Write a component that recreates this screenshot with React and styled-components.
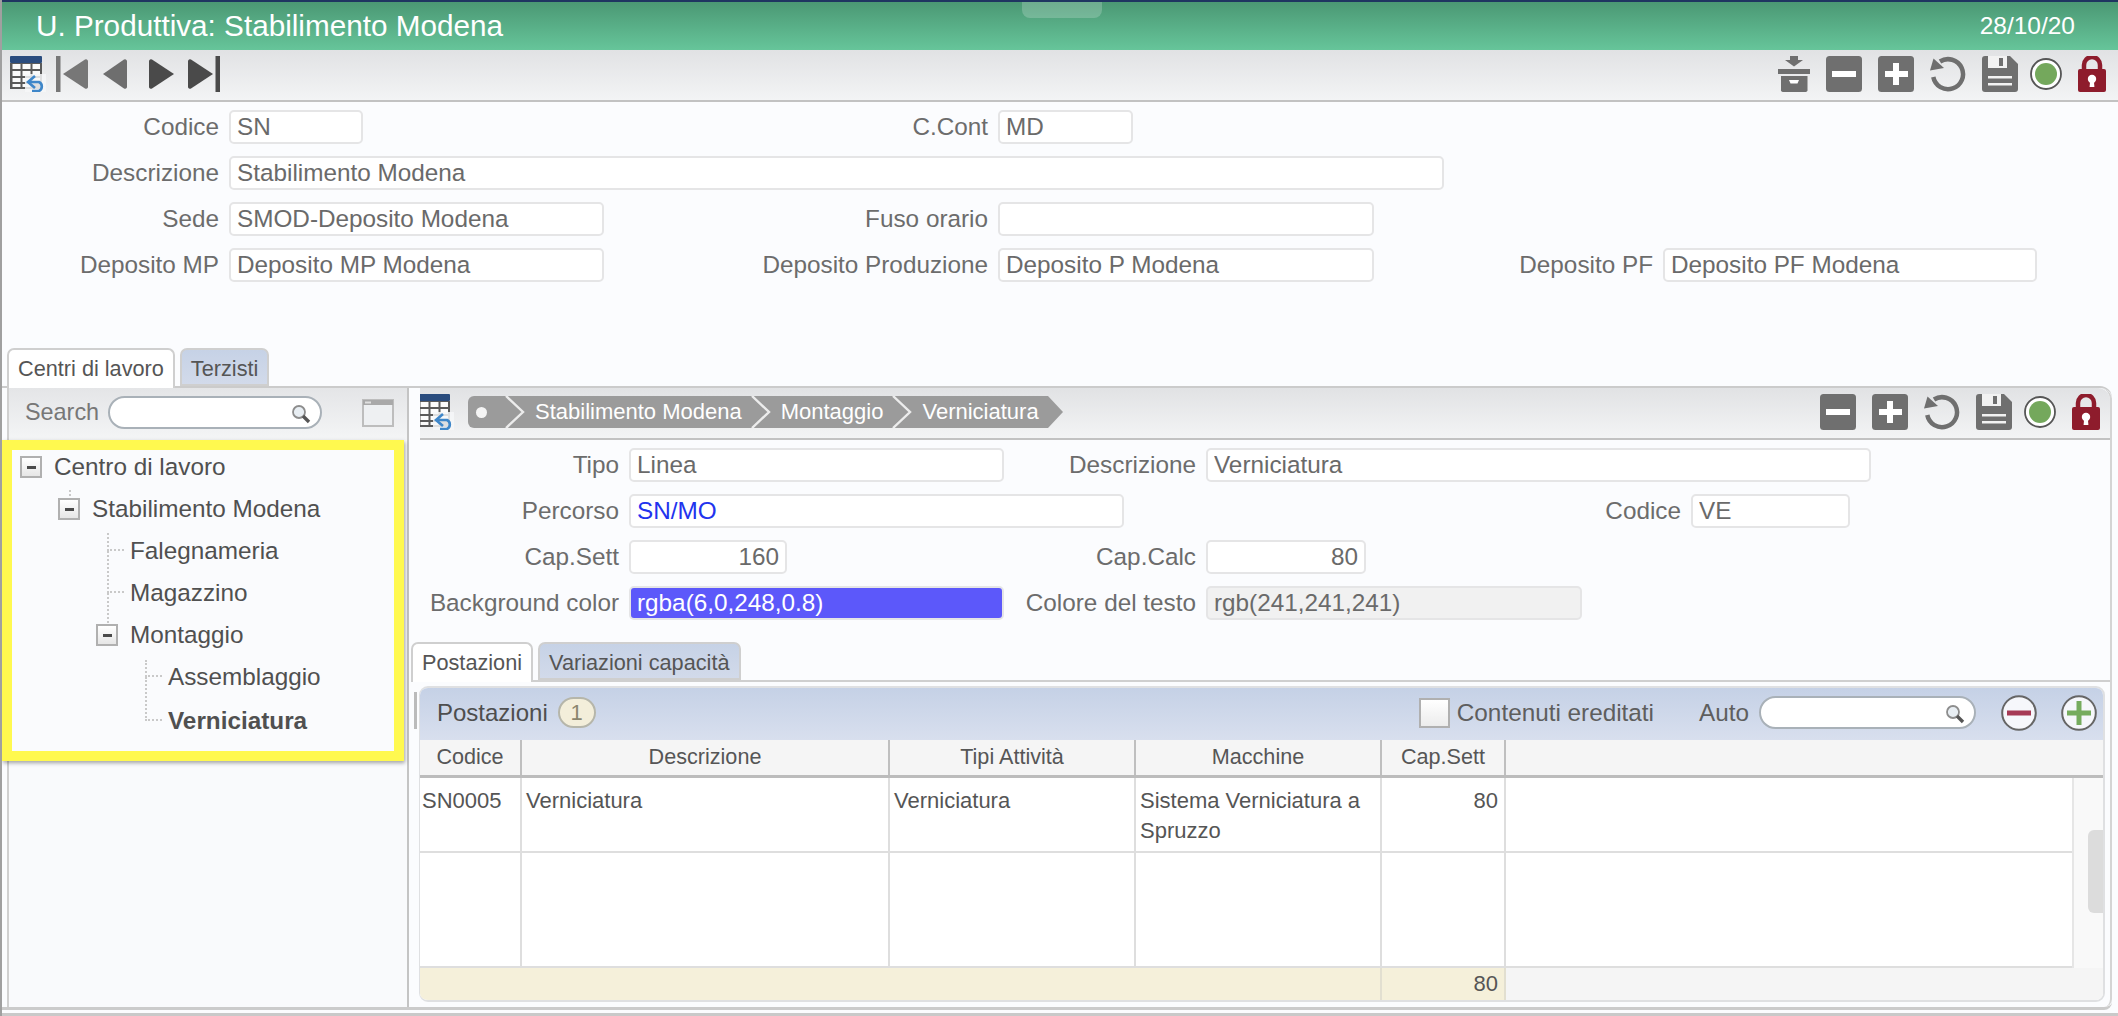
import React from 'react'
import styled, { createGlobalStyle } from 'styled-components'

const GlobalStyle = createGlobalStyle`
    html, body {
        margin: 0;
        padding: 0;
        background: #fcfdfe;
        font-family: "Liberation Sans", Arial, sans-serif;
    }
    * {
        box-sizing: border-box;
    }
`

const Page = styled.div`
    width: 2118px;
    height: 1016px;
    overflow: hidden;
    display: flex;
    flex-direction: column;
    background: #fbfcfe;
    border-left: 2px solid #a0a0a0;
`

const TitleBar = styled.header`
    position: relative;
    flex: none;
    height: 50px;
    display: flex;
    align-items: center;
    justify-content: space-between;
    padding: 0 43px 0 34px;
    border-top: 2px solid #1f3561;
    background: linear-gradient(#4b9874, #66c59a);
    color: #fff;
`

const Title = styled.h1`
    margin: 0;
    font-size: 29.7px;
    font-weight: 400;
`

const DateText = styled.span`
    font-size: 24.5px;
`

const Handle = styled.div`
    position: absolute;
    top: 0;
    left: 1020px;
    width: 80px;
    height: 16px;
    border-radius: 0 0 8px 8px;
    background: rgba(255, 255, 255, 0.2);
`

const Toolbar = styled.div`
    flex: none;
    height: 52px;
    display: flex;
    align-items: flex-start;
    justify-content: space-between;
    overflow: hidden;
    padding: 6px ${props => props.$right}px 0 ${props => props.$left}px;
    margin-left: ${props => props.$inset || 0}px;
    background: linear-gradient(#e1e2e4, #f3f4f5);
    border-bottom: 2px solid #c2c2c2;
    border-top-right-radius: ${props => (props.$rounded ? '12px' : '0')};
`

const IconGroup = styled.div`
    display: flex;
    align-items: flex-start;
`

const ActionGroup = styled(IconGroup)`
    gap: 16px;
`

const Glyph = styled.svg`
    display: block;
    flex: none;
    margin-left: ${props => props.$ml || 0}px;
    margin-top: ${props => props.$mt || 0}px;
`

const Form = styled.section`
    flex: none;
    display: flex;
    flex-direction: column;
    gap: 12px;
    padding: 8px 0 0 ${props => props.$left || 0}px;
`

const Row = styled.div`
    display: flex;
    align-items: center;
    height: 34px;
`

const Label = styled.label`
    flex: none;
    width: ${props => props.$w}px;
    margin-right: 10px;
    text-align: right;
    font-size: 24.3px;
    color: #6c6c6c;
    white-space: nowrap;
`

const Input = styled.input`
    flex: none;
    width: ${props => props.$w}px;
    height: 34px;
    padding: 0 6px;
    border: 2px solid #e5e5e6;
    border-radius: 5px;
    outline: none;
    font-family: inherit;
    font-size: 24.3px;
    text-align: ${props => (props.$number ? 'right' : 'left')};
    color: ${props => props.$color || '#6a6a6a'};
    background: ${props => props.$bg || '#fff'};
`

const TabStrip = styled.div`
    position: relative;
    z-index: 1;
    flex: none;
    display: flex;
    align-items: flex-start;
    gap: 5px;
    height: 40px;
    margin-top: ${props => props.$top}px;
    padding-left: ${props => props.$left}px;
`

const Tab = styled.div`
    height: ${props => (props.$active ? '40px' : '38px')};
    padding: 6px 9px 0;
    border: 2px solid #cfcfcf;
    border-bottom: ${props => (props.$active ? 'none' : '2px solid #cfcfcf')};
    border-radius: 7px 7px 0 0;
    font-size: 21.7px;
    color: #555;
    white-space: nowrap;
    background: ${props => (props.$active ? '#fff' : 'linear-gradient(#c6d2e6, #d2daea)')};
`

const Body = styled.main`
    flex: none;
    display: flex;
    width: 2110px;
    height: 624px;
    margin-top: -2px;
    border-top: 2px solid #cbcbcb;
    border-bottom: 3px solid #cbcbcb;
    border-top-right-radius: 12px;
    border-bottom-right-radius: 8px;
`

const LeftPanel = styled.aside`
    flex: none;
    width: 402px;
    margin-left: 5px;
    border-left: 2px solid #d0d0d0;
    border-right: 2px solid #c4c4c4;
    background: #f9fafc;
`

const SearchBar = styled.div`
    height: 52px;
    display: flex;
    align-items: center;
    padding: 0 12px 3px 16px;
    background: linear-gradient(#e4e5e7, #f4f5f6);
`

const SearchLabel = styled.span`
    font-size: 23.4px;
    color: #777;
    margin-right: 9px;
`

const SearchBox = styled.div`
    flex: none;
    display: flex;
    align-items: center;
    justify-content: flex-end;
    width: ${props => props.$w}px;
    height: 33px;
    margin-left: ${props => props.$ml || 0}px;
    padding-right: 9px;
    border: 2px solid #a9b1b8;
    border-radius: 17px;
    background: #fff;
`

const SearchInput = styled.input`
    flex: 1;
    min-width: 0;
    height: 100%;
    border: none;
    outline: none;
    background: transparent;
    border-radius: 17px;
`

const Highlight = styled.div`
    position: relative;
    z-index: 2;
    width: 402px;
    height: 321px;
    margin-left: -7px;
    padding-top: 1px;
    border: 10px solid #fff94f;
    background: #fafbfd;
    box-shadow: 1px 2px 4px rgba(0, 0, 0, 0.35);
`

const Tree = styled.ul`
    display: flex;
    flex-direction: column;
    gap: 10px;
    margin: 0;
    padding: 0;
    list-style: none;
`

const TreeRow = styled.li`
    position: relative;
    display: flex;
    align-items: center;
    height: 32px;
    margin-top: ${props => (props.$bold ? '2px' : '0')};
    padding-left: ${props => 8 + props.$level * 38}px;
    font-size: 24.3px;
    font-weight: ${props => (props.$bold ? 700 : 400)};
    color: #505050;
`

const Expander = styled.span`
    flex: none;
    display: flex;
    align-items: center;
    justify-content: center;
    width: 22px;
    height: 22px;
    margin-right: 12px;
    border: 2px solid #b0b0b0;
    background: linear-gradient(#fff, #e6e6e6);
    &::after {
        content: '';
        width: 9px;
        height: 3px;
        background: #4a4a4a;
    }
`

const LeafSpacer = styled.span`
    flex: none;
    width: 34px;
`

const Connector = styled.span`
    position: absolute;
    left: ${props => props.$left}px;
    top: ${props => props.$top}px;
    width: ${props => props.$w}px;
    height: ${props => props.$h}px;
    border-left: 2px dotted #c9c9c9;
    border-bottom: ${props => (props.$w > 2 ? '2px dotted #c9c9c9' : 'none')};
`

const RightPanel = styled.div`
    position: relative;
    flex: none;
    width: 1703px;
    display: flex;
    flex-direction: column;
    border-right: 2px solid #d4d4d4;
    border-top-right-radius: 12px;
    border-bottom-right-radius: 8px;
    background: #fbfcfe;
`

const Breadcrumb = styled.nav`
    flex: none;
    display: flex;
    align-items: center;
    width: 595px;
    height: 32px;
    margin: 2px 0 0 14px;
    padding-left: 8px;
    border-radius: 6px 0 0 6px;
    background: #9b9b9b;
    color: #fff;
    font-size: 22px;
    white-space: nowrap;
    clip-path: polygon(0 0, calc(100% - 15px) 0, 100% 50%, calc(100% - 15px) 100%, 0 100%);
`

const CrumbDot = styled.span`
    flex: none;
    width: 11px;
    height: 11px;
    margin-right: 9px;
    border-radius: 50%;
    background: #f4f4f4;
`

const CrumbArrow = styled.svg`
    flex: none;
    width: 20px;
    height: 32px;
    margin: 0 10px 0 9px;
`

const TabPane = styled.div`
    position: relative;
    flex: 1;
    min-height: 0;
    margin: -2px 0 0 2px;
    padding: 4px 5px 0 8px;
    border-top: 2px solid #cfcfcf;
`

const ResizeHandle = styled.span`
    position: absolute;
    left: 3px;
    top: 10px;
    width: 3px;
    height: 37px;
    background: #bbb;
`

const GridWrap = styled.div`
    height: 316px;
    display: flex;
    flex-direction: column;
    overflow: hidden;
    border: 2px solid #dfe0e2;
    border-left-width: 1px;
    border-radius: 9px;
    background: #fff;
`

const GridHead = styled.div`
    flex: none;
    height: 52px;
    display: flex;
    align-items: center;
    padding: 0 6px 3px 17px;
    background: linear-gradient(#c5d1e6, #d8dfee);
`

const GridTitle = styled.span`
    font-size: 24px;
    color: #4e4e4e;
`

const Badge = styled.span`
    display: flex;
    align-items: center;
    justify-content: center;
    width: 38px;
    height: 31px;
    margin-left: 10px;
    border: 2px solid #b6b6aa;
    border-radius: 16px;
    background: #f3eeda;
    font-size: 22px;
    color: #8b8670;
`

const Checkbox = styled.span`
    flex: none;
    width: 31px;
    height: 30px;
    margin-left: auto;
    border: 2px solid #b0b0b0;
    background: linear-gradient(#fff, #ececec);
`

const HeadLabel = styled.span`
    margin-left: ${props => props.$ml}px;
    font-size: 24.3px;
    color: #5e5e5e;
    white-space: nowrap;
`

const COLUMNS = '102px 368px 246px 246px 124px 1fr'

const HeaderRow = styled.div`
    flex: none;
    display: grid;
    grid-template-columns: ${COLUMNS};
    height: 38px;
    border-bottom: 3px solid #bcbcbc;
    background: #f5f5f5;
`

const HeaderCell = styled.div`
    display: flex;
    align-items: center;
    justify-content: center;
    padding-bottom: 2px;
    border-right: ${props => (props.$last ? 'none' : '2px solid #bfbfbf')};
    font-size: 21.6px;
    color: #565656;
    white-space: nowrap;
`

const BodyArea = styled.div`
    flex: none;
    display: flex;
    height: 190px;
`

const Rows = styled.div`
    flex: 1;
    min-width: 0;
    display: flex;
    flex-direction: column;
`

const DataRow = styled.div`
    display: grid;
    grid-template-columns: ${COLUMNS};
    flex: none;
    height: ${props => props.$h}px;
    border-bottom: 2px solid #dedede;
`

const Cell = styled.div`
    padding: 8px 4px 0 ${props => props.$pad || 4}px;
    border-right: ${props => (props.$last ? 'none' : '2px solid #dedede')};
    font-size: 22px;
    line-height: 30px;
    color: #555;
    text-align: ${props => (props.$number ? 'right' : 'left')};
    padding-right: ${props => (props.$number ? '6px' : '2px')};
`

const ScrollTrack = styled.div`
    flex: none;
    width: 31px;
    padding-top: 52px;
    border-left: 2px solid #e6e6e6;
    background: #f9f9f9;
`

const ScrollThumb = styled.div`
    width: 15px;
    height: 83px;
    margin-left: auto;
    border-radius: 6px 0 0 6px;
    background: #dcdcdc;
`

const FooterRow = styled.div`
    flex: 1;
    display: grid;
    grid-template-columns: 962px 124px 1fr;
    background: #f5f5f5;
`

const FooterCell = styled.div`
    display: flex;
    align-items: center;
    justify-content: flex-end;
    padding-right: 6px;
    border-right: 2px solid #e2dfd0;
    font-size: 22px;
    color: #555;
    background: #f5f0da;
`

const BottomLine = styled.div`
    flex: none;
    height: 3px;
    margin-top: 3px;
    background: #c9c9c9;
`

const TableIcon = props => (
    <Glyph width="36" height="36" viewBox="0 0 36 36" {...props}>
        <rect x="0" y="0" width="32" height="7" rx="1" fill="#2a4c7e" />
        <rect x="0" y="7" width="32" height="26" fill="#5a5a5a" />
        <path
            d="M2.5 8h8v5h-8zM12.5 8h8v5h-8zM22.5 8h7.5v5h-7.5zM2.5 15h8v5h-8zM12.5 15h8v5h-8zM22.5 15h7.5v5h-7.5zM2.5 22h8v4h-8zM12.5 22h8v4h-8zM22.5 22h7.5v4h-7.5zM2.5 28h8v3h-8zM12.5 28h8v3h-8z"
            fill="#fbfbfb"
        />
        <path d="M15 18h21v18H15z" fill="#f6f7f8" opacity="0.85" />
        <path d="M19 26h10a5 5 0 0 1 0 9h-7" fill="none" stroke="#3f87c9" strokeWidth="2.6" />
        <path d="M25 20l-7 6 7 6" fill="none" stroke="#3f87c9" strokeWidth="2.6" />
    </Glyph>
)

const NavFirst = ({ color, ...rest }) => (
    <Glyph width="32" height="36" viewBox="0 0 32 36" {...rest}>
        <rect x="0" y="0" width="4.5" height="36" fill={color} />
        <path d="M7 18L29 3.5a2 2 0 0 1 3 1.5v26a2 2 0 0 1-3 1.5z" fill={color} />
    </Glyph>
)

const NavPrev = ({ color, ...rest }) => (
    <Glyph width="24" height="30" viewBox="0 0 24 30" {...rest}>
        <path d="M0 15L21 .5a2 2 0 0 1 3 1.5v26a2 2 0 0 1-3 1.5z" fill={color} />
    </Glyph>
)

const NavNext = ({ color, ...rest }) => (
    <Glyph width="25" height="30" viewBox="0 0 25 30" {...rest}>
        <path d="M25 15L3 .5a2 2 0 0 0-3 1.5v26a2 2 0 0 0 3 1.5z" fill={color} />
    </Glyph>
)

const NavLast = ({ color, ...rest }) => (
    <Glyph width="32" height="36" viewBox="0 0 32 36" {...rest}>
        <rect x="27.5" y="0" width="4.5" height="36" fill={color} />
        <path d="M25 18L3 3.5a2 2 0 0 0-3 1.5v26a2 2 0 0 0 3 1.5z" fill={color} />
    </Glyph>
)

const ArchiveIcon = () => (
    <Glyph width="32" height="36" viewBox="0 0 32 36">
        <path d="M12 0h8v4h5l-9 6.5L7 4h5z" fill="#6f6f6f" />
        <rect x="0" y="13" width="32" height="5" fill="#6f6f6f" />
        <path d="M3 20h26.500v13.500a2 2 0 0 1-2 2.500H5a2 2 0 0 1-2-2.500z" fill="#6f6f6f" />
        <path d="M11 24h10l-1.500 3.500h-7z" fill="#fff" />
    </Glyph>
)

const MinusIcon = () => (
    <Glyph width="36" height="36" viewBox="0 0 36 36">
        <rect width="36" height="36" rx="3.5" fill="#6f6f6f" />
        <rect x="6" y="15" width="24" height="6" fill="#fff" />
    </Glyph>
)

const PlusIcon = () => (
    <Glyph width="36" height="36" viewBox="0 0 36 36">
        <rect width="36" height="36" rx="3.5" fill="#6f6f6f" />
        <path d="M15 7h6v8h9v6h-9v8h-6v-8H7v-6h8z" fill="#fff" />
    </Glyph>
)

const RefreshIcon = () => (
    <Glyph width="36" height="36" viewBox="0 0 36 36">
        <path d="M10 5.500A15 15 0 1 1 3.300 21" fill="none" stroke="#6f6f6f" strokeWidth="4.500" />
        <path d="M0 14.500L3.500 2.500 14 12z" fill="#6f6f6f" />
    </Glyph>
)

const SaveIcon = () => (
    <Glyph width="36" height="36" viewBox="0 0 36 36">
        <path
            d="M3 0h25l8 8v25a3 3 0 0 1-3 3H3a3 3 0 0 1-3-3V3a3 3 0 0 1 3-3z"
            fill="#6f6f6f"
        />
        <path d="M6 0h19v12H6z" fill="#f2f2f2" />
        <rect x="17" y="2" width="4" height="8" fill="#6f6f6f" />
        <rect x="6" y="20" width="24" height="2.5" fill="#f2f2f2" />
        <rect x="6" y="27" width="24" height="2.5" fill="#f2f2f2" />
    </Glyph>
)

const StatusIcon = () => (
    <Glyph width="32" height="32" viewBox="0 0 32 32" $mt={2} $ml={-4}>
        <circle cx="16" cy="16" r="15" fill="#fff" stroke="#565656" strokeWidth="1.8" />
        <circle cx="16" cy="16" r="11" fill="#74a85c" />
    </Glyph>
)

const LockIcon = () => (
    <Glyph width="28" height="36" viewBox="0 0 28 36">
        <path d="M6 15V9a8 8 0 0 1 16 0v6" fill="none" stroke="#8e1c2c" strokeWidth="4.5" />
        <rect x="0" y="13" width="28" height="23" rx="2" fill="#8e1c2c" />
        <circle cx="14" cy="23" r="4.2" fill="#fff" />
        <path d="M12.2 24h3.600l.6 7h-4.800z" fill="#fff" />
    </Glyph>
)

const WindowIcon = () => (
    <Glyph width="32" height="28" viewBox="0 0 32 28" $ml={40}>
        <rect x="1" y="1" width="30" height="26" fill="#eef0f2" stroke="#bdbdbd" strokeWidth="2" />
        <rect x="1" y="1" width="30" height="5" fill="#a9a9a9" />
        <rect x="3" y="2.5" width="6" height="2" fill="#e0e0e0" />
    </Glyph>
)

const Magnifier = () => (
    <Glyph width="20" height="20" viewBox="0 0 20 20" $mt={3}>
        <circle cx="8" cy="8" r="6" fill="#e8eef3" stroke="#8d8d8d" strokeWidth="1.8" />
        <path d="M12 12l6 6" stroke="#555" strokeWidth="3.400" />
    </Glyph>
)

const RoundMinus = () => (
    <Glyph width="36" height="36" viewBox="0 0 36 36" $ml={25}>
        <circle cx="18" cy="18" r="16.8" fill="#f6f7fb" stroke="#666" strokeWidth="2" />
        <rect x="6" y="15.5" width="24" height="5" fill="#a63a55" />
    </Glyph>
)

const RoundPlus = () => (
    <Glyph width="36" height="36" viewBox="0 0 36 36" $ml={24}>
        <circle cx="18" cy="18" r="16.8" fill="#f6f7fb" stroke="#666" strokeWidth="2" />
        <path d="M15.5 6h5v9.5H30v5h-9.5V30h-5v-9.5H6v-5h9.5z" fill="#76ac5e" />
    </Glyph>
)

const Chevron = () => (
    <CrumbArrow viewBox="0 0 20 32">
        <path d="M1 0l17 16L1 32" fill="none" stroke="#ececec" strokeWidth="2.4" />
    </CrumbArrow>
)

const ActionIcons = () => (
    <ActionGroup>
        <MinusIcon />
        <PlusIcon />
        <RefreshIcon />
        <SaveIcon />
        <StatusIcon />
        <LockIcon />
    </ActionGroup>
)

const treeItems = [
    { label: 'Centro di lavoro', level: 0, box: true },
    { label: 'Stabilimento Modena', level: 1, box: true, line: { left: 57, top: -3, w: 2, h: 6 } },
    { label: 'Falegnameria', level: 2, line: { left: 95, top: -2, w: 17, h: 18 } },
    { label: 'Magazzino', level: 2, line: { left: 95, top: -26, w: 17, h: 42 } },
    { label: 'Montaggio', level: 2, box: true, line: { left: 95, top: -26, w: 2, h: 30 } },
    { label: 'Assemblaggio', level: 3, line: { left: 133, top: -1, w: 17, h: 17 } },
    { label: 'Verniciatura', level: 3, bold: true, line: { left: 133, top: -28, w: 17, h: 44 } },
]

const gridColumns = ['Codice', 'Descrizione', 'Tipi Attività', 'Macchine', 'Cap.Sett']

const App = () => (
    <Page>
        <GlobalStyle />
        <TitleBar>
            <Title>U. Produttiva: Stabilimento Modena</Title>
            <Handle />
            <DateText>28/10/20</DateText>
        </TitleBar>

        <Toolbar $left={8} $right={12}>
            <IconGroup>
                <TableIcon />
                <NavFirst color="#777" $ml={10} />
                <NavPrev color="#6e6e6e" $ml={15} $mt={3} />
                <NavNext color="#4a4a4a" $ml={22} $mt={3} />
                <NavLast color="#4a4a4a" $ml={14} />
            </IconGroup>
            <ActionGroup>
                <ArchiveIcon />
                <ActionIcons />
            </ActionGroup>
        </Toolbar>

        <Form>
            <Row>
                <Label $w={217}>Codice</Label>
                <Input readOnly $w={134} value="SN" />
                <Label $w={625}>C.Cont</Label>
                <Input readOnly $w={135} value="MD" />
            </Row>
            <Row>
                <Label $w={217}>Descrizione</Label>
                <Input readOnly $w={1215} value="Stabilimento Modena" />
            </Row>
            <Row>
                <Label $w={217}>Sede</Label>
                <Input readOnly $w={375} value="SMOD-Deposito Modena" />
                <Label $w={384}>Fuso orario</Label>
                <Input readOnly $w={376} value="" />
            </Row>
            <Row>
                <Label $w={217}>Deposito MP</Label>
                <Input readOnly $w={375} value="Deposito MP Modena" />
                <Label $w={384}>Deposito Produzione</Label>
                <Input readOnly $w={376} value="Deposito P Modena" />
                <Label $w={279}>Deposito PF</Label>
                <Input readOnly $w={374} value="Deposito PF Modena" />
            </Row>
        </Form>

        <TabStrip $top={66} $left={5}>
            <Tab $active>Centri di lavoro</Tab>
            <Tab>Terzisti</Tab>
        </TabStrip>

        <Body>
            <LeftPanel>
                <SearchBar>
                    <SearchLabel>Search</SearchLabel>
                    <SearchBox $w={214}>
                        <SearchInput readOnly />
                        <Magnifier />
                    </SearchBox>
                    <WindowIcon />
                </SearchBar>
                <Highlight>
                    <Tree>
                        {treeItems.map(item => (
                            <TreeRow key={item.label} $level={item.level} $bold={item.bold}>
                                {item.line && (
                                    <Connector
                                        $left={item.line.left}
                                        $top={item.line.top}
                                        $w={item.line.w}
                                        $h={item.line.h}
                                    />
                                )}
                                {item.box ? <Expander /> : <LeafSpacer />}
                                {item.label}
                            </TreeRow>
                        ))}
                    </Tree>
                </Highlight>
            </LeftPanel>

            <RightPanel>
                <Toolbar $left={0} $right={10} $inset={11} $rounded>
                    <IconGroup>
                        <TableIcon $ml={-2} />
                        <Breadcrumb>
                            <CrumbDot />
                            <Chevron />
                            Stabilimento Modena
                            <Chevron />
                            Montaggio
                            <Chevron />
                            Verniciatura
                        </Breadcrumb>
                    </IconGroup>
                    <ActionIcons />
                </Toolbar>

                <Form $left={11}>
                    <Row>
                        <Label $w={199}>Tipo</Label>
                        <Input readOnly $w={375} value="Linea" />
                        <Label $w={192}>Descrizione</Label>
                        <Input readOnly $w={665} value="Verniciatura" />
                    </Row>
                    <Row>
                        <Label $w={199}>Percorso</Label>
                        <Input readOnly $w={495} $color="#2233ee" value="SN/MO" />
                        <Label $w={557}>Codice</Label>
                        <Input readOnly $w={159} value="VE" />
                    </Row>
                    <Row>
                        <Label $w={199}>Cap.Sett</Label>
                        <Input readOnly $w={158} $number value="160" />
                        <Label $w={409}>Cap.Calc</Label>
                        <Input readOnly $w={160} $number value="80" />
                    </Row>
                    <Row>
                        <Label $w={199}>Background color</Label>
                        <Input
                            readOnly
                            $w={375}
                            $bg="rgba(6,0,248,0.65)"
                            $color="#fff"
                            value="rgba(6,0,248,0.8)"
                        />
                        <Label $w={192}>Colore del testo</Label>
                        <Input readOnly $w={376} $bg="#f1f1f1" value="rgb(241,241,241)" />
                    </Row>
                </Form>

                <TabStrip $top={22} $left={2}>
                    <Tab $active>Postazioni</Tab>
                    <Tab>Variazioni capacità</Tab>
                </TabStrip>

                <TabPane>
                    <ResizeHandle />
                    <GridWrap>
                        <GridHead>
                            <GridTitle>Postazioni</GridTitle>
                            <Badge>1</Badge>
                            <Checkbox />
                            <HeadLabel $ml={7}>Contenuti ereditati</HeadLabel>
                            <HeadLabel $ml={45}>Auto</HeadLabel>
                            <SearchBox $w={217} $ml={10}>
                                <SearchInput readOnly />
                                <Magnifier />
                            </SearchBox>
                            <RoundMinus />
                            <RoundPlus />
                        </GridHead>
                        <HeaderRow>
                            {gridColumns.map(name => (
                                <HeaderCell key={name}>{name}</HeaderCell>
                            ))}
                            <HeaderCell $last />
                        </HeaderRow>
                        <BodyArea>
                            <Rows>
                                <DataRow $h={75}>
                                    <Cell $pad={2}>SN0005</Cell>
                                    <Cell>Verniciatura</Cell>
                                    <Cell>Verniciatura</Cell>
                                    <Cell>Sistema Verniciatura a Spruzzo</Cell>
                                    <Cell $number>80</Cell>
                                    <Cell $last />
                                </DataRow>
                                <DataRow $h={115}>
                                    <Cell />
                                    <Cell />
                                    <Cell />
                                    <Cell />
                                    <Cell />
                                    <Cell $last />
                                </DataRow>
                            </Rows>
                            <ScrollTrack>
                                <ScrollThumb />
                            </ScrollTrack>
                        </BodyArea>
                        <FooterRow>
                            <FooterCell />
                            <FooterCell>80</FooterCell>
                        </FooterRow>
                    </GridWrap>
                </TabPane>
            </RightPanel>
        </Body>

        <BottomLine />
    </Page>
)

export default App
